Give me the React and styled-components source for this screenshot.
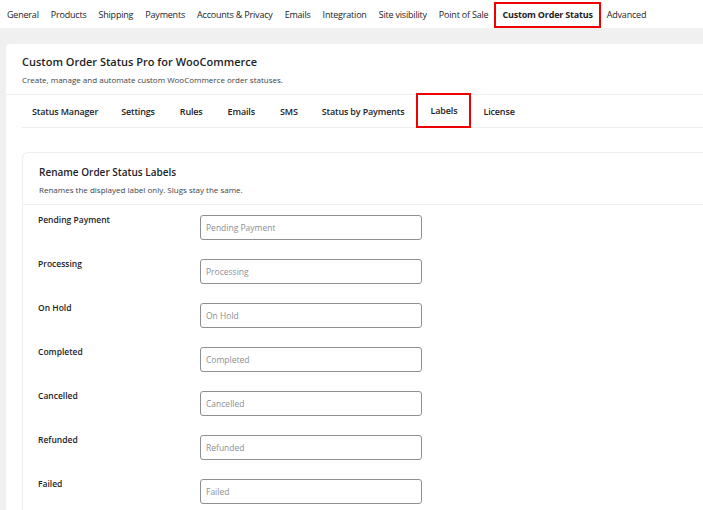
import React from 'react';
import styled, { createGlobalStyle } from 'styled-components';

const Global = createGlobalStyle`
  html, body { margin: 0; background: #f0f0f1; font-family: "Open Sans", "Noto Sans", sans-serif; color: #1d2327; }
  * { box-sizing: border-box; }
`;

const TopNav = styled.div`
  height: 28px;
  background: #fff;
  display: flex;
  align-items: center;
  padding-left: 7px;
  white-space: nowrap;
`;

const NavItem = styled.div`
  font-size: 9px;
  letter-spacing: -0.2px;
  padding: 0 6px;
  height: ${({ boxed }) => (boxed ? '26px' : 'auto')};
  display: flex;
  align-items: center;
  font-weight: ${({ boxed }) => (boxed ? 700 : 400)};
  border: ${({ boxed }) => (boxed ? '2px solid #e00' : 'none')};
  margin-top: ${({ boxed }) => (boxed ? '1px' : '0')};
  &:first-child { padding-left: 0; }
`;

const Outer = styled.div`
  margin: 16px 0 0 6px;
  background: #fff;
  border-radius: 4px 0 0 0;
  padding: 0 0 0 16px;
  min-height: 470px;
`;

const Title = styled.div`
  font-size: 11px;
  font-weight: 600;
  padding-top: 10px;
`;

const Sub = styled.div`
  font-size: 8px;
  color: #3c434a;
  margin-top: 5px;
  padding-bottom: 9px;
`;

const Tabs = styled.div`
  display: flex;
  margin-left: -16px;
  padding-left: 16px;
  border-top: 1px solid #eee;
  height: 34px;
  align-items: stretch;
`;

const TabRow = styled.div`
  display: flex;
  flex: 1;
  border-bottom: 1px solid #eee;
`;

const Tab = styled.div`
  font-size: 9px;
  font-weight: 600;
  letter-spacing: -0.15px;
  padding: 0 ${({ px }) => px}px;
  display: flex;
  align-items: center;
  border: ${({ boxed }) => (boxed ? '2px solid #e00' : 'none')};
  margin: ${({ boxed }) => (boxed ? '-2px 0 -1px' : '0')};
`;

const Card = styled.div`
  margin-top: 24px;
  border: 1px solid #eee;
  border-right: none;
  border-radius: 6px 0 0 0;
`;

const CardHead = styled.div`
  padding: 12px 16px 9px;
  border-bottom: 1px solid #eee;
`;

const CardTitle = styled.div`
  font-size: 10px;
  font-weight: 600;
`;

const CardSub = styled.div`
  font-size: 8px;
  color: #3c434a;
  margin-top: 5px;
`;

const Row = styled.div`
  display: grid;
  grid-template-columns: 162px 222px;
  padding: 10px 0 0 15px;
  height: 44px;
`;

const Label = styled.div`
  font-size: 8.5px;
  font-weight: 600;
  margin-top: -1px;
`;

const Input = styled.input`
  height: 25px;
  border: 1px solid #8c8f94;
  border-radius: 3px;
  padding: 0 5px;
  font-family: inherit;
  font-size: 8.5px;
  &::placeholder { color: #8c8f94; }
`;

const nav = ['General', 'Products', 'Shipping', 'Payments', 'Accounts & Privacy', 'Emails', 'Integration', 'Site visibility', 'Point of Sale', 'Custom Order Status', 'Advanced'];
const tabs = [['Status Manager', 10], ['Settings', 13], ['Rules', 12], ['Emails', 13], ['SMS', 12], ['Status by Payments', 12], ['Labels', 12], ['License', 12]];
const statuses = ['Pending Payment', 'Processing', 'On Hold', 'Completed', 'Cancelled', 'Refunded', 'Failed'];

export default function App() {
  return (
    <>
      <Global />
      <TopNav>
        {nav.map((n) => (
          <NavItem key={n} boxed={n === 'Custom Order Status'}>{n}</NavItem>
        ))}
      </TopNav>
      <Outer>
        <Title>Custom Order Status Pro for WooCommerce</Title>
        <Sub>Create, manage and automate custom WooCommerce order statuses.</Sub>
        <Tabs>
          <TabRow>
            {tabs.map(([t, px]) => (
              <Tab key={t} px={px} boxed={t === 'Labels'}>{t}</Tab>
            ))}
          </TabRow>
        </Tabs>
        <Card>
          <CardHead>
            <CardTitle>Rename Order Status Labels</CardTitle>
            <CardSub>Renames the displayed label only. Slugs stay the same.</CardSub>
          </CardHead>
          {statuses.map((s) => (
            <Row key={s}>
              <Label>{s}</Label>
              <Input placeholder={s} />
            </Row>
          ))}
        </Card>
      </Outer>
    </>
  );
}
